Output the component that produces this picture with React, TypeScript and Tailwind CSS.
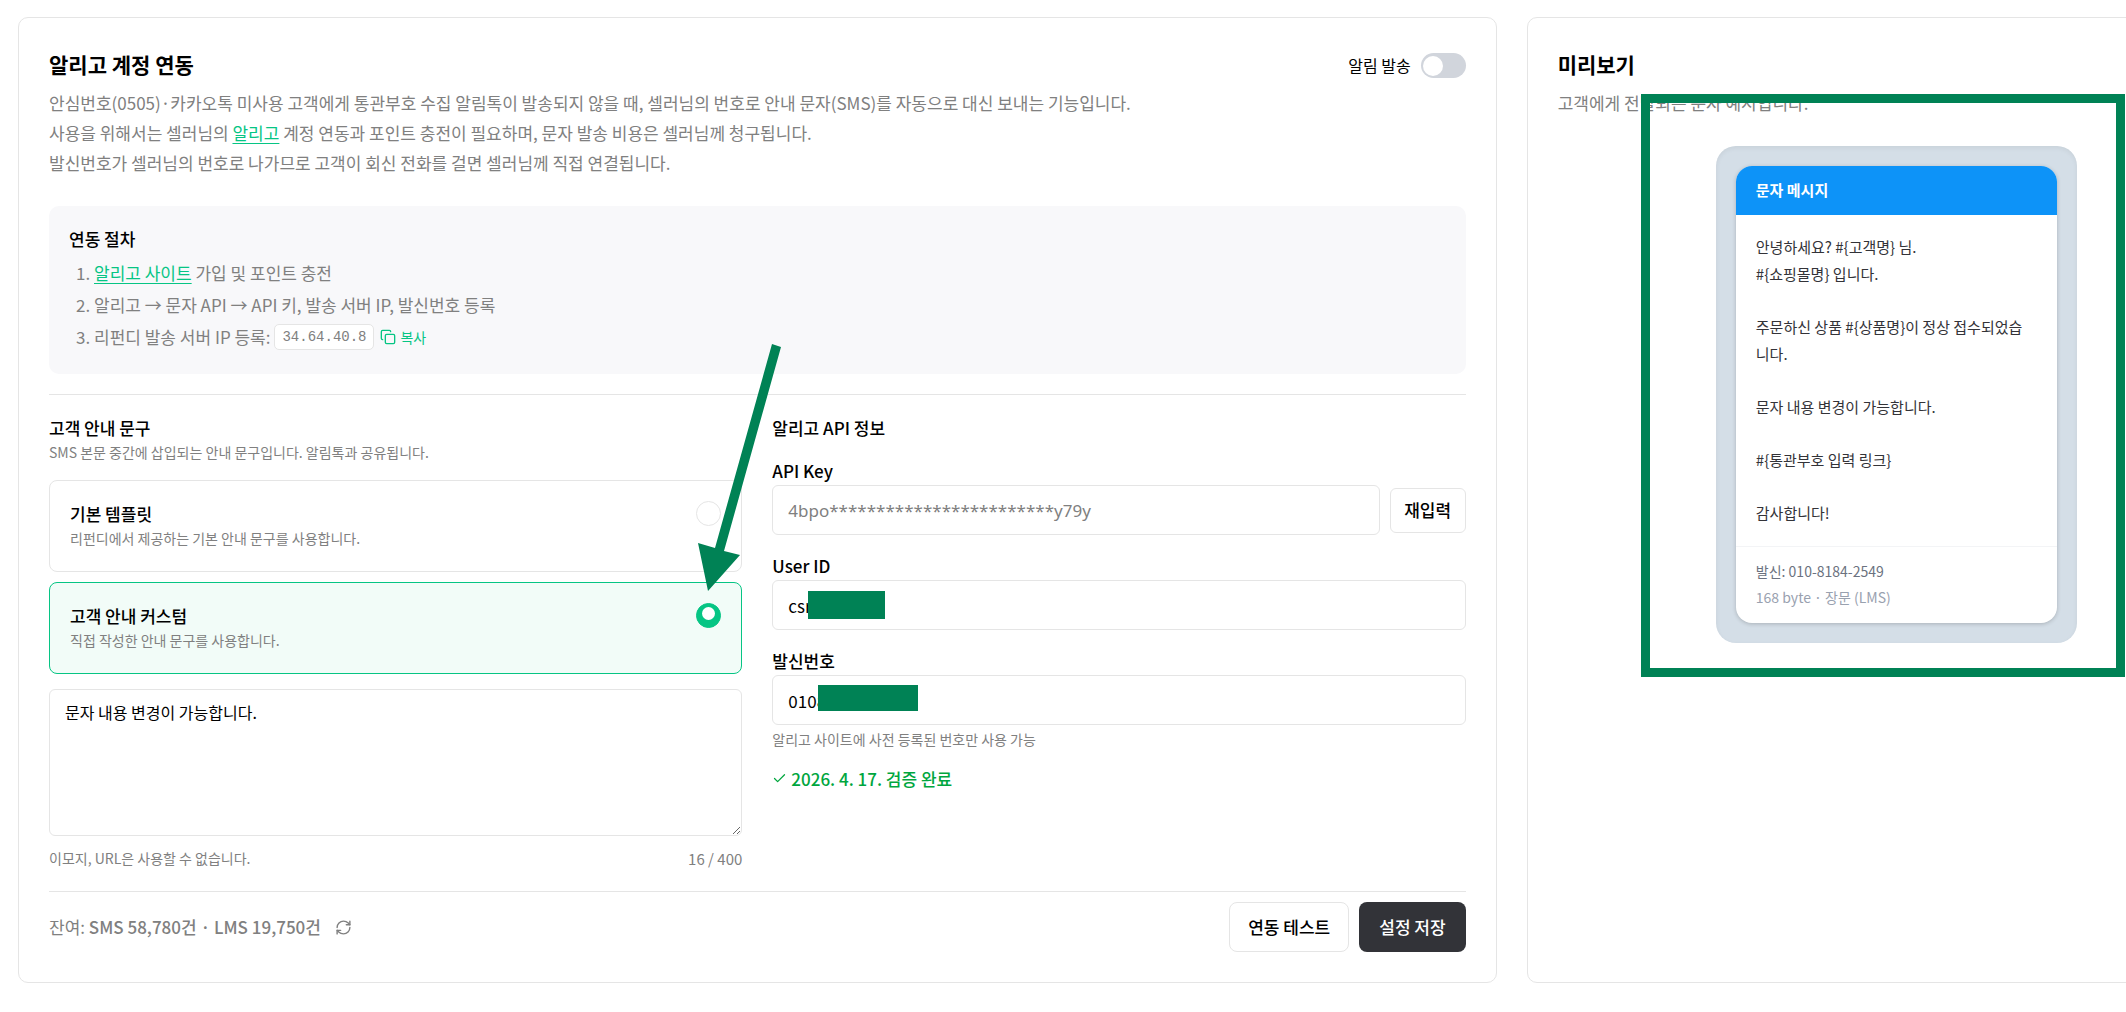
import React, { useState } from "react";
import { Check, Copy, RefreshCw } from "lucide-react";

type Template = "default" | "custom";

const TEMPLATES: { id: Template; title: string; desc: string }[] = [
  {
    id: "default",
    title: "기본 템플릿",
    desc: "리펀디에서 제공하는 기본 안내 문구를 사용합니다.",
  },
  {
    id: "custom",
    title: "고객 안내 커스텀",
    desc: "직접 작성한 안내 문구를 사용합니다.",
  },
];

const INPUT =
  "h-[50px] w-full min-w-0 rounded-md border border-[#e5e5e5] bg-white px-[15px] text-[17px] outline-none";

function TemplateOption({
  title,
  desc,
  checked,
  onSelect,
}: {
  title: string;
  desc: string;
  checked: boolean;
  onSelect: () => void;
}) {
  return (
    <label
      className={`flex cursor-pointer items-start justify-between rounded-lg border p-5 ${
        checked ? "border-[#06c584] bg-[#f2fcf8]" : "border-[#e5e5e5] bg-white"
      }`}
    >
      <span className="flex flex-col">
        <span className="text-[17px] leading-[25px] font-medium">{title}</span>
        <span className="text-[14px] leading-[25px] text-[#808080]">{desc}</span>
      </span>
      <span className="relative size-[25px] shrink-0">
        <input
          type="radio"
          name="template"
          checked={checked}
          onChange={onSelect}
          className="block size-[25px] appearance-none rounded-full border border-[#e5e5e5] bg-white checked:border-[#06c584] checked:bg-[#06c584]"
        />
        {checked && (
          <span className="absolute top-1 left-1.5 size-[13px] rounded-full bg-white" />
        )}
      </span>
    </label>
  );
}

function Field({
  id,
  label,
  children,
}: {
  id: string;
  label: string;
  children: React.ReactNode;
}) {
  return (
    <div className="flex flex-col">
      <label htmlFor={id} className="mb-1 text-[17px] leading-[21px] font-medium">
        {label}
      </label>
      {children}
    </div>
  );
}

function MessagePreview({ custom }: { custom: string }) {
  return (
    <div className="relative w-[361px] rounded-[20px] bg-[#d4dee7] p-5 shadow-[inset_0_2px_5px_rgba(0,0,0,0.06)]">
      <div className="overflow-hidden rounded-2xl bg-white shadow-[0_1px_4px_rgba(0,0,0,0.2)]">
        <div className="bg-[#0d93f8] px-5 pt-[11px] pb-[13px] text-[15px] leading-[25px] font-bold text-white">
          문자 메시지
        </div>
        <div className="flex flex-col gap-[26px] px-5 pt-[18px] pb-5 text-[15px] leading-[27px] text-[#333338]">
          <p>
            안녕하세요? #&#123;고객명&#125; 님.
            <br />
            #&#123;쇼핑몰명&#125; 입니다.
          </p>
          <p>
            주문하신 상품 #&#123;상품명&#125;이 정상 접수되었습
            <br />
            니다.
          </p>
          <p>{custom}</p>
          <p>#&#123;통관부호 입력 링크&#125;</p>
          <p>감사합니다!</p>
        </div>
        <div className="border-t border-[#f3f4f6] px-5 pt-[11px] pb-[13px] text-[14px] leading-[26px]">
          <p className="text-[#6b7280]">발신: 010-8184-2549</p>
          <p className="text-[#99a1af]">168 byte · 장문 (LMS)</p>
        </div>
      </div>

      {/* 강조 테두리 */}
      <div className="pointer-events-none absolute -top-[52px] -right-12 -bottom-[34px] -left-[75px] border-[9px] border-[#008255]" />
    </div>
  );
}

export default function App() {
  const [enabled, setEnabled] = useState(false);
  const [template, setTemplate] = useState<Template>("custom");
  const [message, setMessage] = useState("문자 내용 변경이 가능합니다.");

  return (
    <main className="overflow-x-hidden bg-white py-[17px] pl-[18px] font-['Noto_Sans_CJK_KR',sans-serif] text-black">
      <div className="grid w-[calc(100%+140px)] grid-cols-[2fr_1fr] gap-[30px]">
        <section className="rounded-[10px] border border-[#e5e5e5] p-[30px]">
          <div className="flex items-start justify-between">
            <h1 className="text-[21px] leading-[33px] font-bold">알리고 계정 연동</h1>
            <div className="mt-[5px] flex items-center gap-2.5">
              <span id="alarm-label" className="text-[16px] leading-[25px]">
                알림 발송
              </span>
              <button
                type="button"
                role="switch"
                aria-checked={enabled}
                aria-labelledby="alarm-label"
                onClick={() => setEnabled(!enabled)}
                className={`flex h-[25px] w-[45px] items-center rounded-full px-0.5 ${
                  enabled ? "justify-end bg-[#06c584]" : "bg-[#d1d5dc]"
                }`}
              >
                <span className="size-5 rounded-full bg-white" />
              </button>
            </div>
          </div>
          <p className="mt-[7px] text-[17px] leading-[30px] text-[#808080]">
            안심번호(0505)·카카오톡 미사용 고객에게 통관부호 수집 알림톡이 발송되지 않을
            때, 셀러님의 번호로 안내 문자(SMS)를 자동으로 대신 보내는 기능입니다.
            <br />
            사용을 위해서는 셀러님의{" "}
            <a href="#aligo" className="text-[#06c584] underline underline-offset-[3px]">
              알리고
            </a>{" "}
            계정 연동과 포인트 충전이 필요하며, 문자 발송 비용은 셀러님께 청구됩니다.
            <br />
            발신번호가 셀러님의 번호로 나가므로 고객이 회신 전화를 걸면 셀러님께 직접
            연결됩니다.
          </p>

          {/* 연동 절차 */}
          <div className="mt-7 rounded-[10px] bg-[#f8f8fa] p-5">
            <h2 className="text-[17px] leading-[25px] font-medium">연동 절차</h2>
            <ol className="mt-2 flex list-decimal flex-col gap-1 pl-[25px] text-[17px] leading-7 text-[#808080]">
              <li>
                <a
                  href="#site"
                  className="text-[#06c584] underline underline-offset-[3px]"
                >
                  알리고 사이트
                </a>{" "}
                가입 및 포인트 충전
              </li>
              <li>알리고 → 문자 API → API 키, 발송 서버 IP, 발신번호 등록</li>
              <li className="pb-[3px]">
                <div className="flex items-center">
                  <span>리펀디 발송 서버 IP 등록:</span>
                  <code className="ml-1 h-[26px] rounded-[5px] border border-[#e5e5e5] bg-white px-[7px] font-['Liberation_Mono',monospace] text-[14px] leading-6">
                    34.64.40.8
                  </code>
                  <button
                    type="button"
                    className="ml-1.5 flex items-center gap-1 text-[14px] text-[#06c584]"
                  >
                    <Copy size={16} strokeWidth={2} />
                    복사
                  </button>
                </div>
              </li>
            </ol>
          </div>

          <div className="mt-5 grid grid-cols-2 gap-[30px] border-t border-[#e5e5e5] pt-5 pb-5">
            <div className="relative flex flex-col">
              <h2 className="text-[17px] leading-[25px] font-medium">고객 안내 문구</h2>
              <p className="text-[14px] leading-[25px] text-[#808080]">
                SMS 본문 중간에 삽입되는 안내 문구입니다. 알림톡과 공유됩니다.
              </p>
              <div className="mt-[15px] flex flex-col gap-2.5">
                {TEMPLATES.map((t) => (
                  <TemplateOption
                    key={t.id}
                    title={t.title}
                    desc={t.desc}
                    checked={template === t.id}
                    onSelect={() => setTemplate(t.id)}
                  />
                ))}
              </div>
              <textarea
                aria-label="고객 안내 문구"
                value={message}
                maxLength={400}
                onChange={(e) => setMessage(e.target.value)}
                className="mt-[15px] block h-[147px] w-full rounded-md border border-[#e5e5e5] px-[15px] py-2.5 text-[16px] leading-[25px] outline-none"
              />
              <div className="mt-2.5 flex justify-between leading-[25px] text-[#808080]">
                <span className="text-[14px]">이모지, URL은 사용할 수 없습니다.</span>
                <span className="text-[15px]">{message.length} / 400</span>
              </div>

              {/* 화살표 */}
              <svg
                className="pointer-events-none absolute -top-20 -right-[50px] h-[260px] w-[100px]"
                viewBox="0 0 100 260"
                fill="#008255"
              >
                <path d="M80 9 L89 12 L32 216 L48 220 L16 256 L6 208 L23 213 Z" />
              </svg>
            </div>

            <div className="flex flex-col gap-5">
              <h2 className="text-[17px] leading-[25px] font-medium">알리고 API 정보</h2>
              <Field id="api-key" label="API Key">
                <div className="flex items-center gap-2.5">
                  <input
                    id="api-key"
                    readOnly
                    value="4bpo************************y79y"
                    className={`${INPUT} font-['Noto_Sans',sans-serif] text-[#808080]`}
                  />
                  <button
                    type="button"
                    className="h-[45px] w-[76px] shrink-0 rounded-md border border-[#e5e5e5] text-[17px] font-medium"
                  >
                    재입력
                  </button>
                </div>
              </Field>
              <Field id="user-id" label="User ID">
                <div className="relative">
                  <input id="user-id" defaultValue="csr" className={INPUT} />
                  <span className="absolute top-[11px] left-9 h-7 w-[77px] bg-[#008255]" />
                </div>
              </Field>
              <Field id="sender" label="발신번호">
                <div className="relative">
                  <input id="sender" defaultValue="0108" className={INPUT} />
                  <span className="absolute top-2.5 left-[46px] h-[26px] w-[100px] bg-[#008255]" />
                </div>
                <p className="mt-0.5 text-[14px] leading-[25px] text-[#808080]">
                  알리고 사이트에 사전 등록된 번호만 사용 가능
                </p>
                <p className="mt-3.5 flex items-center gap-1 text-[17px] leading-[25px] font-medium text-[#00a63e]">
                  <Check size={15} strokeWidth={2} />
                  2026. 4. 17. 검증 완료
                </p>
              </Field>
            </div>
          </div>

          <div className="flex items-center justify-between border-t border-[#e5e5e5] pt-2.5">
            <div className="flex items-center text-[17px] text-[#808080]">
              <span>
                잔여:{" "}
                <span className="font-medium">SMS 58,780건 · LMS 19,750건</span>
              </span>
              <button type="button" aria-label="새로고침" className="ml-3.5">
                <RefreshCw size={17} strokeWidth={2} />
              </button>
            </div>
            <div className="flex gap-2.5 text-[17px] font-medium">
              <button
                type="button"
                className="h-[50px] rounded-lg border border-[#e5e5e5] px-[18px]"
              >
                연동 테스트
              </button>
              <button
                type="button"
                className="h-[50px] rounded-lg bg-[#323338] px-5 text-white"
              >
                설정 저장
              </button>
            </div>
          </div>
        </section>

        <section className="rounded-[10px] border border-[#e5e5e5] p-[30px]">
          <h1 className="text-[21px] leading-[33px] font-bold">미리보기</h1>
          <p className="mt-[7px] text-[17px] leading-[30px] text-[#808080]">
            고객에게 전달되는 문자 예시입니다.
          </p>
          <div className="mt-7 flex justify-center">
            <MessagePreview custom={message} />
          </div>
        </section>
      </div>
    </main>
  );
}
